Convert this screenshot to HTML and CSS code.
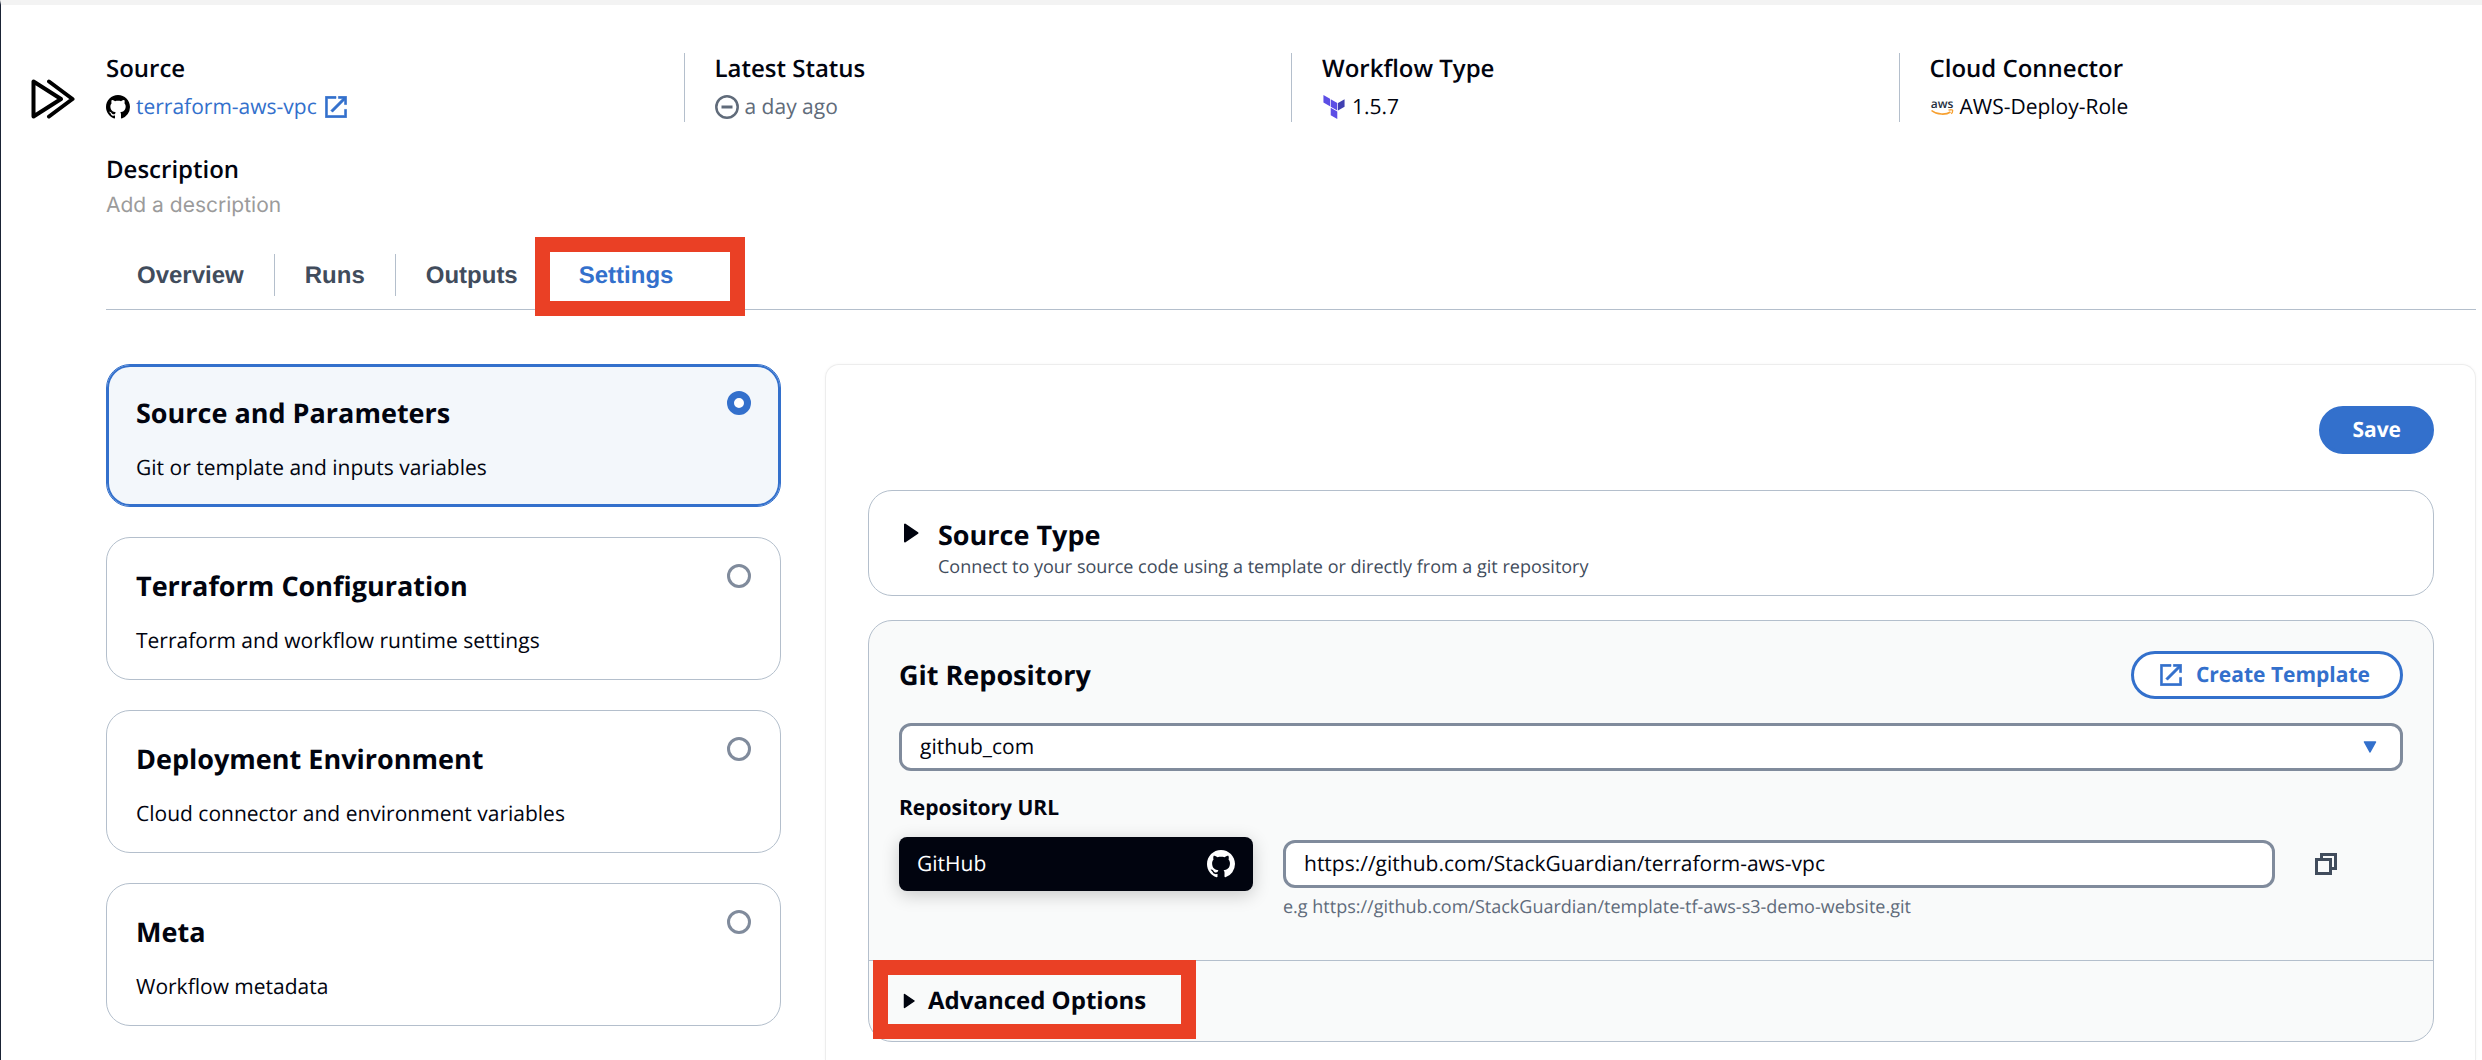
FILE: index.html
```html
<!DOCTYPE html>
<html lang="en">
<head>
<meta charset="utf-8">
<title>Workflow settings</title>
<link rel="stylesheet" href="styles.css">
</head>
<body>
<svg class="sprite" aria-hidden="true">
  <symbol id="github" viewBox="0 0 16 16"><path fill="currentColor" d="M8 0C3.58 0 0 3.58 0 8c0 3.54 2.29 6.53 5.47 7.59.4.07.55-.17.55-.38 0-.19-.01-.82-.01-1.49-2.01.37-2.53-.49-2.69-.94-.09-.23-.48-.94-.82-1.13-.28-.15-.68-.52-.01-.53.63-.01 1.08.58 1.23.82.72 1.21 1.87.87 2.33.66.07-.52.28-.87.51-1.07-1.78-.2-3.64-.89-3.64-3.95 0-.87.31-1.59.82-2.15-.08-.2-.36-1.02.08-2.12 0 0 .67-.21 2.2.82.64-.18 1.32-.27 2-.27s1.36.09 2 .27c1.53-1.04 2.2-.82 2.2-.82.44 1.1.16 1.92.08 2.12.51.56.82 1.27.82 2.15 0 3.07-1.87 3.75-3.65 3.95.29.25.54.73.54 1.48 0 1.07-.01 1.93-.01 2.2 0 .21.15.46.55.38A8.01 8.01 0 0 0 16 8c0-4.42-3.58-8-8-8z"/></symbol>
  <symbol id="external" viewBox="3 3 18 18"><path fill="currentColor" stroke="currentColor" stroke-width=".5" d="M19 19H5V5h7V3.300H3.300v17.400h17.400V14H19v5zM14 3.300v1.700h3.590l-9.830 9.830 1.410 1.410L19 6.410V10h1.700V3.300z"/></symbol>
</svg>
<div class="app">
  <div class="rail">
    <svg class="logo" viewBox="0 0 44 40" role="img" aria-label="Workflow"><path d="M2.500 2.500V37.500L30 20zM18 2.500L41.500 20L18 37.500" fill="none" stroke="#000" stroke-width="4" stroke-linejoin="round" stroke-linecap="round"/></svg>
  </div>
  <main class="main">
    <dl class="facts">
      <div class="fact">
        <dt>Source</dt>
        <dd class="source"><svg class="icon-github"><use href="#github"/></svg><a href="#source">terraform-aws-vpc <svg class="icon-external"><use href="#external"/></svg></a></dd>
      </div>
      <div class="fact">
        <dt>Latest Status</dt>
        <dd class="muted"><svg class="icon-status" viewBox="0 0 24 24"><circle cx="12" cy="12" r="10.700" fill="none" stroke="currentColor" stroke-width="2.500"/><path d="M6.500 12h11" stroke="currentColor" stroke-width="3"/></svg>a day ago</dd>
      </div>
      <div class="fact">
        <dt>Workflow Type</dt>
        <dd><svg class="icon-brand" viewBox="0 0 24 24"><path fill="#5c4ee5" d="M1.440 0v7.575l6.561 3.790V3.787zM8.720 4.230v7.575l6.561 3.787V8.018zm0 8.405v7.575L15.280 24v-7.578z"/><path fill="#4040b2" d="M22.560 4.227l-6.561 3.791v7.574l6.560-3.787z"/></svg>1.5.7</dd>
      </div>
      <div class="fact">
        <dt>Cloud Connector</dt>
        <dd><svg class="icon-brand" viewBox="0 0 24 24"><text x="12" y="12.500" class="aws-word">aws</text><path d="M1.500 15.500C7 20 16 20 20.500 17" fill="none" stroke="#f7a030" stroke-width="1.600"/><path d="M18.500 15.200c2-.6 4.200-.6 4.200.2s-.4 2.400-1.500 3.500" fill="none" stroke="#f7a030" stroke-width="1.300"/></svg>AWS-Deploy-Role</dd>
      </div>
    </dl>

    <div class="description">
      <label for="description">Description</label>
      <input id="description" type="text" placeholder="Add a description">
    </div>

    <nav class="tabs">
      <a href="#overview">Overview</a>
      <a href="#runs">Runs</a>
      <a href="#outputs">Outputs</a>
      <a href="#settings" class="active" aria-current="page">Settings</a>
    </nav>

    <div class="settings">
      <div class="sections" role="radiogroup" aria-label="Settings section">
        <label class="section"><span class="section-text"><strong>Source and Parameters</strong><span>Git or template and inputs variables</span></span><input type="radio" name="section" checked></label>
        <label class="section"><span class="section-text"><strong>Terraform Configuration</strong><span>Terraform and workflow runtime settings</span></span><input type="radio" name="section"></label>
        <label class="section"><span class="section-text"><strong>Deployment Environment</strong><span>Cloud connector and environment variables</span></span><input type="radio" name="section"></label>
        <label class="section"><span class="section-text"><strong>Meta</strong><span>Workflow metadata</span></span><input type="radio" name="section"></label>
      </div>

      <form class="panel">
        <div class="actions"><button type="button" class="button primary">Save</button></div>

        <details class="card source-type">
          <summary>
            <svg class="caret-large" viewBox="0 0 16 20"><path d="M2 1.500v17L14.500 10z" fill="currentColor" stroke="currentColor" stroke-width="2" stroke-linejoin="round"/></svg>
            <span class="summary-text"><strong>Source Type</strong><small>Connect to your source code using a template or directly from a git repository</small></span>
          </summary>
        </details>

        <section class="card git">
          <div class="git-body">
            <div class="git-head">
              <h2>Git Repository</h2>
              <button type="button" class="button outline"><svg class="icon-external"><use href="#external"/></svg>Create Template</button>
            </div>
            <div class="select">
              <select aria-label="Git provider"><option>github_com</option></select>
              <svg class="select-arrow" viewBox="0 0 14 12"><path d="M1.500 1h11L7 11z" fill="currentColor" stroke="currentColor" stroke-width="1.500" stroke-linejoin="round"/></svg>
            </div>
            <label class="field-label" for="repo">Repository URL</label>
            <div class="repo">
              <div class="provider">GitHub<svg class="icon-provider"><use href="#github"/></svg></div>
              <div class="repo-field">
                <input id="repo" type="text" value="https://github.com/StackGuardian/terraform-aws-vpc">
                <p>e.g https://github.com/StackGuardian/template-tf-aws-s3-demo-website.git</p>
              </div>
              <button type="button" class="copy" aria-label="Copy URL"><svg viewBox="0 0 22 22"><path d="M6.500 5V1.500h14v14H17M1.500 6.500h14v14h-14z" fill="none" stroke="currentColor" stroke-width="3"/></svg></button>
            </div>
          </div>
          <details class="advanced">
            <summary><svg class="caret-small" viewBox="0 0 12 16"><path d="M1.500 1.500v13L11 8z" fill="currentColor" stroke="currentColor" stroke-width="1.500" stroke-linejoin="round"/></svg>Advanced Options</summary>
          </details>
        </section>
      </form>
    </div>
  </main>
</div>
</body>
</html>
```
FILE: styles.css
```css
:root {
  --ink: #01040f;
  --slate: #414c5c;
  --muted: #606b7a;
  --field: #808b9c;
  --line: #b4bfcc;
  --blue: #3370cc;
  --red: #ea4025;
}

*, *::before, *::after { box-sizing: border-box; }

body {
  margin: 0;
  background: #fff;
  color: var(--ink);
  font-family: "Open Sans", "Noto Sans", sans-serif;
  font-size: 21px;
  line-height: 30px;
  text-rendering: geometricPrecision;
}

button, input, select { font: inherit; color: inherit; text-rendering: inherit; }
svg { display: block; flex: none; }
.sprite { position: absolute; width: 0; height: 0; }

.app {
  display: flex;
  min-height: 100vh;
  border-top: 5px solid #f3f3f3;
  border-left: 1px solid #1a2335;
}

.rail { flex: none; width: 105px; padding: 74px 0 0 30px; }
.logo { width: 44px; height: 40px; }

.main {
  flex: 1;
  min-width: 0;
  display: flex;
  flex-direction: column;
  padding: 48px 6px 0 0;
}

.facts {
  display: grid;
  grid-template-columns: repeat(4, 1fr);
  gap: 60px;
  margin: 0;
}
.fact { padding-top: 1px; }
.fact + .fact {
  margin-left: -30px;
  padding-left: 30px;
  border-left: 1px solid var(--line);
}
.fact dt { margin-bottom: 8px; font-size: 24px; font-weight: 600; }
.fact dd { display: flex; align-items: center; gap: 6px; margin: 0; }
.fact a { display: flex; align-items: center; gap: 8px; color: var(--blue); text-decoration: none; }
.muted { color: var(--muted); }
.icon-github { width: 24px; height: 24px; color: #000; }
.icon-status, .icon-brand { width: 24px; height: 24px; }
.icon-external { width: 22px; height: 22px; }
.aws-word { font-size: 12px; font-weight: 600; fill: #252f3e; text-anchor: middle; }

.description { display: flex; flex-direction: column; gap: 6px; margin-top: 33px; }
.description label { font-size: 24px; font-weight: 600; }
.description input {
  height: 30px;
  padding: 0;
  border: 0;
  outline: 0;
  background: none;
  font-family: Inter, sans-serif;
}
.description input::placeholder { color: #9b9b9b; opacity: 1; }

.tabs {
  display: flex;
  margin-top: 33px;
  padding: 0 0 13px 1px;
  border-bottom: 1px solid var(--line);
}
.tabs a {
  padding: 2px 30px 0;
  border-right: 1px solid var(--line);
  color: var(--slate);
  font: bold 24px/40px "Liberation Sans", Arial, sans-serif;
  text-decoration: none;
}
.tabs .active { position: relative; border-right: 0; color: var(--blue); }
.tabs .active::after {
  content: "";
  position: absolute;
  top: -17px;
  left: -14px;
  width: 210px;
  height: 79px;
  border: 15px solid var(--red);
}

.settings {
  flex: 1;
  display: grid;
  grid-template-columns: 675fr 1651fr;
  gap: 44px;
  margin-top: 54px;
}

.sections { display: flex; flex-direction: column; gap: 30px; }
.section {
  display: flex;
  justify-content: space-between;
  align-items: flex-start;
  padding: 26px 29px 23px;
  border: 1px solid var(--line);
  border-radius: 24px;
}
.section:has(:checked) {
  border-color: var(--blue);
  background: #f3f7fb;
  box-shadow: inset 0 0 0 2px var(--blue);
}
.section-text { display: flex; flex-direction: column; gap: 22px; padding-top: 4px; }
.section strong { font-size: 27px; font-weight: 700; line-height: 36px; }
.section input {
  appearance: none;
  flex: none;
  width: 24px;
  height: 24px;
  margin: 0;
  border: 3px solid var(--field);
  border-radius: 50%;
  background: #fff;
}
.section input:checked { border: 7px solid var(--blue); }

.panel {
  padding: 41px 41px 18px 42px;
  border: 1px solid #ededed;
  border-bottom: 0;
  border-radius: 14px 14px 0 0;
  box-shadow: 0 0 3px rgba(0, 0, 0, .04);
}
.actions { display: flex; justify-content: flex-end; margin-bottom: 36px; }

.button {
  display: flex;
  align-items: center;
  height: 48px;
  border: 3px solid var(--blue);
  border-radius: 24px;
  font-weight: 700;
}
.primary { padding: 0 30px; background: var(--blue); color: #fff; }
.outline { gap: 14px; padding: 0 30px 0 26px; background: #fff; color: var(--blue); }

.card { border: 1px solid var(--line); border-radius: 24px; background: #fff; }
summary { display: flex; list-style: none; }

.source-type { margin-bottom: 24px; }
.source-type summary { gap: 19px; padding: 26px 34px 16px; }
.caret-large { width: 16px; height: 20px; margin-top: 6px; }
.summary-text { display: flex; flex-direction: column; gap: 2px; }
.summary-text strong { font-size: 27px; line-height: 36px; }
.summary-text small { color: var(--slate); font-size: 18px; line-height: 24px; }

.git { background: #f9fafa; }
.git-body { padding: 30px 30px 42px; }
.git-head { display: flex; justify-content: space-between; align-items: center; }
.git-head h2 { margin: 0; font-size: 27px; line-height: 36px; }

.select { position: relative; margin: 24px 0 23px; }
.select select, .repo-field input {
  display: block;
  width: 100%;
  height: 48px;
  padding: 0 18px;
  border: 3px solid var(--field);
  border-radius: 12px;
  background: #fff;
  appearance: none;
}
.select-arrow {
  position: absolute;
  top: 18px;
  right: 26px;
  width: 14px;
  height: 12px;
  color: var(--blue);
  pointer-events: none;
}

.field-label { display: block; margin-bottom: 15px; font-weight: 700; line-height: 28px; }
.repo { display: grid; grid-template-columns: 354px 1fr 98px; gap: 30px; align-items: start; }
.provider {
  display: flex;
  justify-content: space-between;
  align-items: center;
  height: 54px;
  padding: 0 18px;
  border-radius: 8px;
  background: var(--ink);
  box-shadow: 0 4px 18px rgba(0, 0, 0, .2);
  color: #fff;
}
.icon-provider { width: 28px; height: 28px; }
.repo-field { padding-top: 3px; }
.repo-field p { margin: 7px 0 0; color: var(--muted); font-size: 18px; line-height: 24px; }
.git-body { padding-bottom: 41px; }
.copy { justify-self: start; padding: 16px 10px; border: 0; background: none; color: var(--slate); }
.copy svg { width: 22px; height: 22px; }

.advanced { position: relative; border-top: 1px solid var(--line); }
.advanced summary {
  align-items: center;
  gap: 13px;
  padding: 24px 34px;
  font-size: 24px;
  font-weight: 700;
  line-height: 32px;
}
.caret-small { width: 12px; height: 16px; }
.advanced::after {
  content: "";
  position: absolute;
  top: -1px;
  left: 4px;
  width: 323px;
  height: 79px;
  border: 15px solid var(--red);
  pointer-events: none;
}
```
